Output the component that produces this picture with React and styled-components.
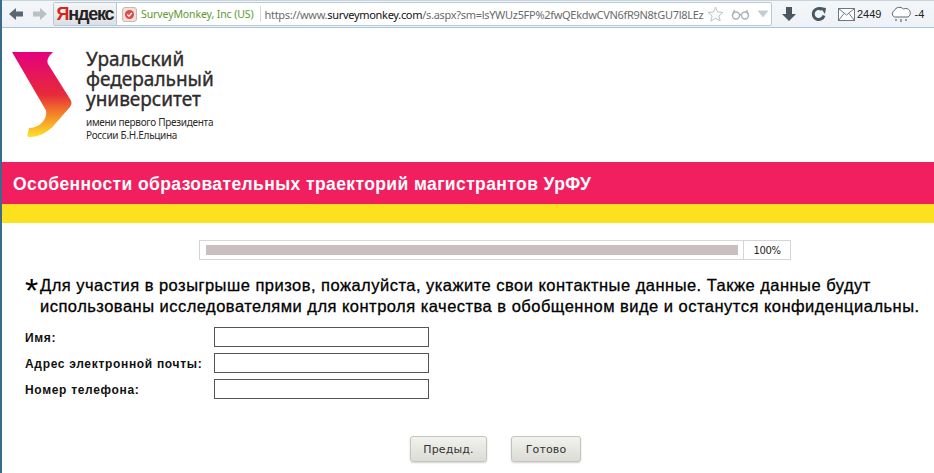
import styled, { createGlobalStyle } from "styled-components";

const Global = createGlobalStyle`
  html, body { margin: 0; padding: 0; background: #fff; }
  body { font-family: "Liberation Sans", Arial, sans-serif; }
`;

const Window = styled.div`
  width: 934px;
  height: 473px;
  box-sizing: border-box;
  border-left: 2px solid #3a6a8c;
  overflow: hidden;
  display: flex;
  flex-direction: column;
`;

const Toolbar = styled.div`
  height: 28px;
  box-sizing: border-box;
  background: linear-gradient(#f3f6f9, #eef2f6);
  border-top: 1px solid #c9d3dc;
  border-bottom: 1px solid #a9c4d6;
  display: flex;
  align-items: center;
  padding-left: 6px;
`;

const NavArrow = styled.svg`
  width: 16px;
  height: 14px;
  margin-right: ${(p) => p.$gap}px;
  flex: none;
`;

const AddressBar = styled.div`
  width: 719px;
  height: 24px;
  margin-left: 1px;
  box-sizing: border-box;
  background: #fff;
  border: 1px solid #b5cbdb;
  border-radius: 2px;
  display: flex;
  align-items: center;
  overflow: hidden;
  flex: none;
`;

const YandexTab = styled.div`
  width: 62px;
  height: 100%;
  flex: none;
  background: linear-gradient(#f6f6f6, #dcdfe3);
  border-right: 1px solid #b9c6d0;
  font: bold 18px "Liberation Sans Narrow", "Liberation Sans", sans-serif;
  color: #222;
  display: flex;
  align-items: center;
  justify-content: center;
  letter-spacing: -1.2px;
  span { color: #d8241f; }
`;

const Identity = styled.div`
  display: flex;
  align-items: center;
  gap: 4px;
  padding: 0 6px 0 5px;
  height: 16px;
  border-right: 1px solid #d3dbe2;
  font: 10.5px "Noto Sans", sans-serif;
  letter-spacing: -0.1px;
  color: #5c9a2c;
  white-space: nowrap;
  flex: none;
`;

const Url = styled.div`
  flex: 1;
  min-width: 0;
  margin-left: 4px;
  font: 11px "Noto Sans", sans-serif;
  letter-spacing: -0.3px;
  color: #6b6b6b;
  white-space: nowrap;
  overflow: hidden;
  b { font-weight: normal; color: #111; }
`;

const AddressIcons = styled.div`
  display: flex;
  align-items: center;
  gap: 7px;
  padding: 0 2px 0 3px;
  flex: none;
`;

const ToolIcons = styled.div`
  display: flex;
  align-items: center;
  margin-left: 10px;
  color: #222;
  font: 11px "Liberation Sans", sans-serif;
`;

const ToolItem = styled.div`
  display: flex;
  align-items: center;
  gap: 2px;
  margin-right: ${(p) => p.$gap}px;
`;

const LogoBlock = styled.div`
  height: 134px;
  flex: none;
  box-sizing: border-box;
  padding: 20px 0 0 9px;
  display: flex;
`;

const LogoText = styled.div`
  margin-left: 13px;
  padding-top: 1px;
  width: 140px;
  color: #2e2b2c;
`;

const LogoTitle = styled.div`
  font: 19px/20px "Noto Sans", sans-serif;
  -webkit-text-stroke: 0.35px #2e2b2c;
  letter-spacing: 0;
  white-space: nowrap;
`;

const LogoSub = styled.div`
  margin-top: 7px;
  font: 10px/12.5px "Noto Sans", sans-serif;
  letter-spacing: -0.3px;
  white-space: nowrap;
`;

const TitleBar = styled.h1`
  margin: 0;
  height: 42px;
  box-sizing: border-box;
  flex: none;
  background: #f21f60;
  color: #fff;
  font: bold 17.5px/45px "Liberation Sans", sans-serif;
  letter-spacing: 0.4px;
  padding-left: 11px;
  white-space: nowrap;
`;

const YellowBar = styled.div`
  height: 19px;
  flex: none;
  background: #fde01e;
`;

const Progress = styled.div`
  width: 592px;
  height: 20px;
  box-sizing: border-box;
  margin: 17px 0 0 197px;
  border: 1px solid #d5d5d5;
  display: flex;
  flex: none;
`;

const ProgressTrack = styled.div`
  flex: 1;
  padding: 4px 5px 4px 6px;
  border-right: 1px solid #d5d5d5;
`;

const ProgressFill = styled.div`
  height: 100%;
  background: #c9bfc0;
`;

const ProgressValue = styled.div`
  width: 46px;
  text-align: center;
  font: 10px/19px "DejaVu Sans", sans-serif;
  letter-spacing: -0.4px;
  color: #222;
`;

const Question = styled.div`
  margin: 15px 0 0 23px;
  display: flex;
  flex: none;
  color: #000;
`;

const Star = styled.span`
  width: 15px;
  flex: none;
  font: 34px/30px "Liberation Sans", sans-serif;
  height: 20px;
`;

const QuestionText = styled.div`
  font: 16.5px/21px "Liberation Sans", sans-serif;
  -webkit-text-stroke: 0.3px #000;
  letter-spacing: 0.48px;
  white-space: nowrap;
`;

const Fields = styled.div`
  margin: 10px 0 0 23px;
  display: grid;
  grid-template-columns: 189px 215px;
  row-gap: 6px;
  align-items: center;
  flex: none;
`;

const FieldLabel = styled.label`
  font: bold 12px "Liberation Sans", sans-serif;
  letter-spacing: 0.68px;
  color: #111;
  padding-top: 2px;
`;

const FieldInput = styled.input`
  width: 215px;
  height: 20px;
  box-sizing: border-box;
  border: 1px solid #555;
  background: #fff;
  padding: 0;
`;

const Buttons = styled.div`
  margin: 37px 0 0 408px;
  display: flex;
  gap: 24px;
  flex: none;
`;

const NavButton = styled.button`
  width: ${(p) => p.$width}px;
  height: 26px;
  padding: 0;
  border: 1px solid #c4c4bc;
  border-radius: 3px;
  background: linear-gradient(#f2f2ee, #dcdcd6);
  box-shadow: 0 1px 2px rgba(0, 0, 0, 0.18);
  font: 11px "DejaVu Sans", sans-serif;
  letter-spacing: 0.15px;
  color: #333;
`;

const Logo = () => (
  <svg width="62" height="94" viewBox="0 0 62 94" style={{ flex: "none" }}>
    <defs>
      <linearGradient id="ural" x1="0" y1="0" x2="0" y2="1">
        <stop offset="0" stopColor="#e5007e" />
        <stop offset="0.5" stopColor="#e62a3a" />
        <stop offset="0.75" stopColor="#f58a25" />
        <stop offset="1" stopColor="#fee12b" />
      </linearGradient>
    </defs>
    <path
      d="M1 4 H42 C39 7 35 11 37 16 L59 51 C61 54 61 56 59 59 L44 76 C37 85 27 89 19 89 C16 89 16 88 17 85 L18 80 C24 80 30 77 33 72 C36 67 36 63 33 59 Z"
      fill="url(#ural)"
    />
  </svg>
);

export default function App() {
  return (
    <Window>
      <Global />
      <Toolbar>
        <NavArrow $gap={8} viewBox="0 0 16 14">
          <path d="M1 7 L8 1 V4.5 H15 V9.5 H8 V13 Z" fill="#5a6670" />
        </NavArrow>
        <NavArrow $gap={4} viewBox="0 0 16 14">
          <path d="M15 7 L8 1 V4.5 H1 V9.5 H8 V13 Z" fill="#b9c0c6" />
        </NavArrow>
        <AddressBar>
          <YandexTab><span>Я</span>ндекс</YandexTab>
          <Identity>
            <svg width="15" height="15" viewBox="0 0 15 15">
              <rect x="0.5" y="0.5" width="14" height="14" rx="2.5" fill="#f1dfdb" stroke="#c9b7b2" />
              <circle cx="7.5" cy="7.5" r="4.5" fill="#dd4b42" />
              <path d="M5.3 7.5 L7 9.2 L9.8 5.8" fill="none" stroke="#fff" strokeWidth="1.3" />
            </svg>
            SurveyMonkey, Inc (US)
          </Identity>
          <Url>https://www.<b>surveymonkey.com</b>/s.aspx?sm=lsYWUz5FP%2fwQEkdwCVN6fR9N8tGU7l8LEz</Url>
          <AddressIcons>
            <svg width="17" height="16" viewBox="0 0 17 16">
              <path d="M8.5 1 L10.6 6 L16 6.4 L11.9 9.9 L13.2 15 L8.5 12.3 L3.8 15 L5.1 9.9 L1 6.4 L6.4 6 Z" fill="#fafafa" stroke="#b9c3ca" />
            </svg>
            <svg width="19" height="12" viewBox="0 0 19 12">
              <g fill="none" stroke="#a9b2b8" strokeWidth="1.4">
                <circle cx="5" cy="7.5" r="3.5" />
                <circle cx="14" cy="7.5" r="3.5" />
                <path d="M8.5 7 Q9.5 6 10.5 7 M1.5 7 L3.5 2 M17.5 7 L15.5 2" />
              </g>
            </svg>
            <svg width="12" height="8" viewBox="0 0 12 8">
              <path d="M0.5 0.5 H11.5 L6 7.5 Z" fill="#c3cdd4" />
            </svg>
          </AddressIcons>
        </AddressBar>
        <ToolIcons>
          <ToolItem $gap={15}>
            <svg width="14" height="16" viewBox="0 0 14 16">
              <path d="M4 1 H10 V8 H14 L7 15 L0 8 H4 Z" fill="#4a5864" />
            </svg>
          </ToolItem>
          <ToolItem $gap={11}>
            <svg width="16" height="16" viewBox="0 0 16 16">
              <path d="M13 9.5 A5.5 5.5 0 1 1 11 3.6" fill="none" stroke="#4a5864" strokeWidth="3" />
              <path d="M9 1 L15 2 L14 8 Z" fill="#4a5864" />
            </svg>
          </ToolItem>
          <ToolItem $gap={9}>
            <svg width="17" height="13" viewBox="0 0 17 13">
              <rect x="0.5" y="0.5" width="16" height="12" fill="#fff" stroke="#6c7780" />
              <path d="M0.5 0.5 L8.5 7 L16.5 0.5 M0.5 12.5 L6 5.5 M16.5 12.5 L11 5.5" fill="none" stroke="#6c7780" />
            </svg>
            2449
          </ToolItem>
          <ToolItem $gap={0}>
            <svg width="22" height="17" viewBox="0 0 22 17">
              <path d="M6 11 H4.5 A3.5 3.5 0 0 1 4.5 4.5 A5 4 0 0 1 13.5 3 A4 4 0 0 1 18 11 H6 Z" fill="#fff" stroke="#5f6a73" />
              <path d="M6 13 v2 M11 13 v3 M16 13 v2" stroke="#5f6a73" strokeWidth="1.2" />
            </svg>
            -4
          </ToolItem>
        </ToolIcons>
      </Toolbar>

      <LogoBlock>
        <Logo />
        <LogoText>
          <LogoTitle>
            Уральский<br />федеральный<br />университет
          </LogoTitle>
          <LogoSub>
            имени первого Президента<br />России Б.Н.Ельцина
          </LogoSub>
        </LogoText>
      </LogoBlock>

      <TitleBar>Особенности образовательных траекторий магистрантов УрФУ</TitleBar>
      <YellowBar />

      <Progress>
        <ProgressTrack>
          <ProgressFill />
        </ProgressTrack>
        <ProgressValue>100%</ProgressValue>
      </Progress>

      <Question>
        <Star>*</Star>
        <QuestionText>
          Для участия в розыгрыше призов, пожалуйста, укажите свои контактные данные. Также данные будут<br />
          использованы исследователями для контроля качества в обобщенном виде и останутся конфиденциальны.
        </QuestionText>
      </Question>

      <Fields>
        <FieldLabel>Имя:</FieldLabel>
        <FieldInput />
        <FieldLabel>Адрес электронной почты:</FieldLabel>
        <FieldInput />
        <FieldLabel>Номер телефона:</FieldLabel>
        <FieldInput />
      </Fields>

      <Buttons>
        <NavButton $width={77}>Предыд.</NavButton>
        <NavButton $width={70}>Готово</NavButton>
      </Buttons>
    </Window>
  );
}
